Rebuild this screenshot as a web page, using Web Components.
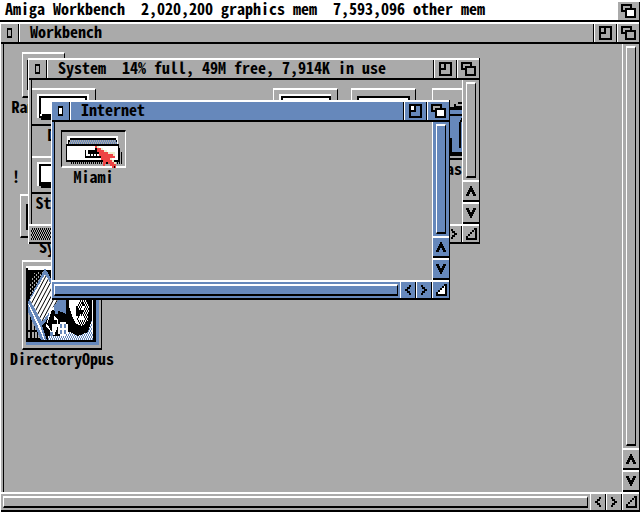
<!DOCTYPE html>
<html lang="en">
<head>
<meta charset="utf-8">
<title>Amiga Workbench</title>
<style>
html, body { margin: 0; height: 100%; }
body {
  --grey: #aaaaaa; --blue: #6688bb; --ink: #000; --lit: #fff;
  background: var(--grey); color: var(--ink);
  font: 700 16px/16px "Noto Sans Mono CJK JP", "Noto Sans CJK JP", "Liberation Mono", monospace;
  font-feature-settings: "hwid" 1;
}
</style>
</head>
<body>
<wb-screen>
  <wb-menubar slot="bar">Amiga Workbench  2,020,200 graphics mem  7,593,096 other mem</wb-menubar>

  <wb-window slot="root" heading="Workbench">
    <wb-icon label="Ram Disk" style="left:18px;top:8px">
      <svg width="41" height="42" shape-rendering="crispEdges"><path d="M4 6h34v2H6v28H4z"/></svg>
    </wb-icon>
    <wb-icon label="!" bare style="left:8px;top:124px"></wb-icon>
    <wb-icon label="System" style="left:16px;top:150px">
      <svg width="84" height="40" shape-rendering="crispEdges"><path d="M5 8h70v26H5z"/><path fill="#fff" d="M7 8h66v24H7z"/></svg>
    </wb-icon>
    <wb-icon label="DirectoryOpus" style="left:18px;top:216px">
      <svg width="78" height="86" viewBox="1 2 78 86" shape-rendering="crispEdges">
        <defs>
          <pattern id="st" width="4" height="6" patternUnits="userSpaceOnUse" patternTransform="skewX(-28)"><path fill="#fff" d="M0 0h4v6H0z"/><path d="M0 0h1v6H0z"/></pattern>
          <pattern id="ck" width="2" height="4" patternUnits="userSpaceOnUse"><path d="M0 0h1v2H0zM1 2h1v2H1z"/></pattern>
          <pattern id="cb" width="2" height="4" patternUnits="userSpaceOnUse"><path fill="#68b" d="M0 0h2v4H0z"/><path fill="#fff" d="M0 0h1v2H0zM1 2h1v2H1z"/></pattern>
          <pattern id="cg" width="4" height="4" patternUnits="userSpaceOnUse"><path fill="#aaa" d="M0 0h1v2H0zM2 2h1v2H2z"/></pattern>
        </defs>
        <path fill="#68b" d="M4 82h73v3H4zM74 8h3v76h-3z"/>
        <path fill="#fff" d="M4 6h72v2H4z"/>
        <path d="M4 8h70v74H4z"/>
        <path fill="#fff" d="M6 8h66v2H6zM70 10h1v68h-1z"/>
        <path fill="url(#cg)" d="M13 12h8L8 40V24z"/>
        <path fill="#aaa" d="M6 48h12v30H6z"/>
        <path d="M8 54h2v24H8zM12 60h1v18h-1zM15 64h1v14h-1zM6 70h12v2H6z"/>
        <path fill="#68b" d="M23 8l16 28 2 4-21 26 5 14h-6L6 52V42z"/>
        <path fill="#fff" d="M6 44h1l12 24 4 12h-1z"/>
        <path fill="url(#st)" d="M23 14l6 10 9 14-18 24L8 40z"/>
        <path fill="#68b" d="M40 38h4v16l-4-2-10-2z"/>
        <path fill="#fff" d="M28 50l4-4v10l5 4 1 6-6 10-8-10z"/>
        <path d="M30 50h2v10h3v4h-5v8l-5-8zM36 54l4 6-4 16h-4l4-10z"/>
        <path fill="#68b" d="M33 46h3v8h-3zM28 72h3v4h-3z"/>
        <path fill="url(#cb)" d="M26 76h45v4H26zM44 72h27v8H44zM66 60h4v18h-4z"/>
        <path d="M44 38h26v22l-4 12-10 4-8-4-4-16z"/>
        <path fill="#fff" d="M47 38h17l3 8-1 14-5 6-7-2-4-8-3-10z"/>
        <path fill="url(#ck)" d="M57 38h10v24l-6 6-6-6z"/>
        <path d="M54 46h2v4h3v4h-2v2h-3zM60 42h2v4h-2zM58 50h3v4h-3z"/>
        <path fill="#fff" d="M60 46h2v4h-2zM57 56h5v4h-5zM38 62h6v2h2v10h-2v2h-6v-2h-2V64h2z"/>
        <path fill="#68b" d="M38 64h2v4h-2zM42 64h2v4h-2zM38 70h2v4h-2zM42 70h2v4h-2z"/>
      </svg>
    </wb-icon>
  </wb-window>

  <wb-window slot="free" heading="System  14% full, 49M free, 7,914K in use" dithered style="left:28px;top:58px;width:452px;height:186px">
    <wb-icon label="Demo" style="left:-1px;top:8px">
      <svg width="63" height="34" shape-rendering="crispEdges"><path fill="#fff" d="M5 4h52v24H5z"/><path d="M7 6h48v22H7zM9 28h50v2H9z"/><path fill="#fff" d="M9 8h44v16H9zM8 24h2v2H8z"/></svg>
    </wb-icon>
    <wb-icon label="Storage" style="left:-1px;top:76px">
      <svg width="63" height="34" shape-rendering="crispEdges"><path fill="#fff" d="M5 4h52v24H5z"/><path d="M7 6h48v22H7zM9 28h50v2H9z"/><path fill="#fff" d="M9 8h44v16H9z"/></svg>
    </wb-icon>
    <wb-icon style="left:241px;top:8px">
      <svg width="63" height="34" shape-rendering="crispEdges"><path fill="#fff" d="M5 4h52v24H5z"/><path d="M7 6h50v22H7z"/><path fill="#fff" d="M9 8h46v18H9z"/></svg>
    </wb-icon>
    <wb-icon style="left:319px;top:8px">
      <svg width="63" height="34" shape-rendering="crispEdges"><path d="M5 6h53v22H5z"/><path fill="#fff" d="M7 8h49v18H7z"/></svg>
    </wb-icon>
    <wb-icon label="Classes" style="left:400px;top:8px">
      <svg width="50" height="68" shape-rendering="crispEdges"><path d="M21 14h4v-2h20v5h4v45H5V17h16z"/><path fill="#68b" d="M7 20h42v4H7zM7 26h42v36H7z"/><path fill="#aaa" d="M23 14h22v2H23z"/><path d="M17 48h2v14h-2zM26 32h2v26h-2zM28 28h3v2h-3zM27 30h2v2h-2zM30 34h1v2h-1zM29 36h1v2h-1zM30 40h1v2h-1zM29 42h1v2h-1zM30 46h1v2h-1zM29 50h1v2h-1zM30 54h1v4h-1zM5 62h44v4H5z"/></svg>
    </wb-icon>
  </wb-window>

  <wb-window slot="free" heading="Internet" active style="left:51px;top:100px;width:399px;height:200px">
    <wb-icon label="Miami" selected style="left:6px;top:8px">
      <svg width="63" height="34" viewBox="62 132 63 34" shape-rendering="crispEdges">
        <defs><pattern id="bd" width="2" height="4" patternUnits="userSpaceOnUse"><path fill="#68b" d="M0 0h2v4H0z"/><path fill="#aaa" d="M0 0h1v2H0zM1 2h1v2H1z"/></pattern></defs>
        <path fill="#fff" d="M67 136h51v10H67z"/>
        <path d="M70 138h46v2h1v4h2v18H66v-18h2v-4h2z"/>
        <path fill="url(#bd)" d="M70 140h46v2h1v2H69v-2h1z"/>
        <path fill="#fff" d="M67 146h51v14H67z"/>
        <path d="M85 150h1v6h14v2H85zM88 150h10v2h2v4h-1v-2h-2v2h-1v-2h-2v2h-1v-2h-2v2h-1v-2h-2zM119 148h1v14h-1zM121 152h1v12h-1z"/>
        <path stroke="#000" stroke-width="2" stroke-dasharray="1 1" d="M71 163h49"/>
      </svg>
    </wb-icon>
  </wb-window>

  <wb-pointer slot="free" style="left:95px;top:146px"></wb-pointer>
</wb-screen>

<script>
const define = (name, html, setup) => customElements.define(name, class extends HTMLElement {
  constructor() {
    super();
    const t = document.createElement('template');
    t.innerHTML = html;
    this.attachShadow({ mode: 'open' }).append(t.content.cloneNode(true));
  }
  connectedCallback() { if (setup) setup(this, this.shadowRoot); }
});

/* Gadget glyphs on a grid whose cells are 1px wide and 2px high: [width, rows, ink path, front fill, back fill] */
const GLYPHS = {
  close: [5, 5, 'M0 0h5v5H0zM1 1v3h3V1z', 'M1 1h3v3H1z', ''],
  zoom:  [13, 7, 'M0 0h13v7H0zM2 1v2h3V1zM7 1v3H2v2h9V1z', 'M2 1h3v2H2z', ''],
  depth: [15, 7, 'M0 0h11v2h4v5H4V4H0zM2 1v2h2V2h5V1zM6 3v3h7V3z', 'M6 3h7v3H6z', 'M2 1h7v1H4v1H2z'],
  up:    [10, 5, 'M4 0h2v1h1v1h1v1h1v1h1v1H7V4H6V3H4v1H3v1H0V4h1V3h1V2h1V1h1z', '', ''],
  down:  [10, 5, 'M0 0h3v1h1v1h2V1h1V0h3v1H9v1H8v1H7v1H6v1H4V4H3V3H2V2H1V1H0z', '', ''],
  left:  [6, 5, 'M4 0h2v1H5v1H3v1h2v1h1v1H4V4H2V3H0V2h2V1h2z', '', ''],
  right: [6, 5, 'M0 0h2v1h2v1h2v1H4v1H2v1H0V4h1V3h2V2H1V1H0z', '', ''],
  size:  [11, 6, 'M8 0h3v6H0V4h2V3h2V2h2V1h2zM9 1H8v1H6v1H4v1H2v1h7z', 'M8 1h1v4H2V4h2V3h2V2h2z', '']
};

define('wb-gadget', `
<style>
:host { display: block; }
button { all: unset; box-sizing: border-box; display: grid; place-items: center; width: 100%; height: 100%; cursor: default; }
svg { display: block; }
</style>
<button type="button"></button>`, (el, root) => {
  const [w, rows, ink, front, back] = GLYPHS[el.getAttribute('kind')];
  const b = root.querySelector('button');
  b.setAttribute('aria-label', el.getAttribute('kind'));
  b.innerHTML = `<svg width="${w}" height="${rows * 2}" viewBox="0 0 ${w} ${rows}" preserveAspectRatio="none" shape-rendering="crispEdges"><path style="fill:var(--glyph-back,none)" d="${back}"/><path style="fill:var(--glyph-fill,none)" d="${front}"/><path fill-rule="evenodd" d="${ink}"/></svg>`;
});

define('wb-menubar', `
<style>
:host { display: flex; height: 20px; background: var(--lit); border-bottom: 2px solid var(--ink); --glyph-fill: #fff; }
h1 { flex: 1; min-width: 0; margin: 0; padding-left: 5px; font: inherit; white-space: pre; }
wb-gadget { width: 21px; margin-top: 2px; background: var(--grey); border-right: 1px solid var(--ink); }
</style>
<h1><slot></slot></h1><wb-gadget kind="depth"></wb-gadget>`);

define('wb-window', `
<style>
:host { --face: var(--grey); box-sizing: border-box; display: grid; grid-template-rows: 22px 1fr 20px;
  background: var(--face); border: solid; border-width: 0 1px; border-color: var(--lit) var(--ink) var(--ink) var(--lit); }
:host([active]) { --face: var(--blue); --glyph-fill: #fff; --glyph-back: #aaa; }
header { display: flex; border-top: 2px solid var(--lit); border-bottom: 2px solid var(--ink); }
header wb-gadget { width: 21px; border-left: 1px solid var(--lit); border-right: 1px solid var(--ink); }
header .close { width: 17px; border-left: 0; }
header .depth { border-right: 0; }
h2 { flex: 1; min-width: 0; margin: 0; padding-left: 10px; font: inherit; line-height: 14px; white-space: pre;
  border-left: 1px solid var(--lit); border-right: 1px solid var(--ink); }
.middle { display: flex; min-height: 0; padding-left: 2px; }
.content { position: relative; flex: 1; min-width: 0; overflow: hidden; background: var(--grey); border-left: 1px solid var(--ink); }
.side { display: grid; grid-template-rows: 1fr 22px 22px; width: 16px; border-left: 1px solid var(--lit); }
.knob { box-sizing: border-box; border: solid; border-width: 2px 1px; border-color: var(--lit) var(--ink) var(--ink) var(--lit); }
.side .knob { margin: 2px 3px; }
.side wb-gadget { box-sizing: border-box; border-top: 2px solid var(--lit); border-bottom: 2px solid var(--ink); }
footer { display: flex; border-top: 2px solid var(--lit); border-bottom: 2px solid var(--ink); }
footer .knob { flex: 1; margin: 2px; }
footer wb-gadget { box-sizing: border-box; width: 16px; border-left: 1px solid var(--lit); border-right: 1px solid var(--ink); }
footer .size { width: 17px; border-right: 0; }
:host([dithered]) footer .knob { border: 0; background: conic-gradient(#000 25%, var(--grey) 0 50%, #000 0 75%, var(--grey) 0) 0 0 / 2px 4px; }
</style>
<header><wb-gadget class="close" kind="close"></wb-gadget><h2></h2><wb-gadget kind="zoom"></wb-gadget><wb-gadget class="depth" kind="depth"></wb-gadget></header>
<div class="middle">
  <div class="content"><slot></slot></div>
  <div class="side"><div class="knob"></div><wb-gadget kind="up"></wb-gadget><wb-gadget kind="down"></wb-gadget></div>
</div>
<footer><div class="knob"></div><wb-gadget kind="left"></wb-gadget><wb-gadget kind="right"></wb-gadget><wb-gadget class="size" kind="size"></wb-gadget></footer>`,
(el, root) => { root.querySelector('h2').textContent = el.getAttribute('heading'); });

define('wb-icon', `
<style>
:host { position: absolute; display: block; }
button { all: unset; display: flex; flex-direction: column; align-items: center; cursor: default; }
.frame { border: solid; border-width: 2px 1px; border-color: var(--lit) var(--ink) var(--ink) var(--lit); }
:host([selected]) .frame { border-color: var(--ink) var(--lit) var(--lit) var(--ink); }
:host([bare]) .frame { border: 0; }
::slotted(svg) { display: block; }
.caption { display: flex; justify-content: center; width: 0; white-space: pre; }
:host([bare]) .caption { width: auto; }
</style>
<button type="button"><span class="frame"><slot></slot></span><span class="caption"></span></button>`,
(el, root) => { root.querySelector('.caption').textContent = el.getAttribute('label') || ''; });

define('wb-pointer', `
<style>:host { position: absolute; pointer-events: none; } svg { display: block; }</style>
<svg width="22" height="22" viewBox="0 0 22 11" preserveAspectRatio="none" shape-rendering="crispEdges">
<path fill="#eeeecc" d="M2 0h2v1H2zM6 1h2v1H6zM9 2h3v1H9zM13 3h7v1h-7zM18 4h2v1h-2zM15 6h2v1h-2zM17 7h2v1h-2zM19 8h2v1h-2z"/>
<path fill="#ee4444" d="M0 0h2v1H0zM2 1h4v1H2zM2 2h7v1H2zM4 3h9v1H4zM4 4h14v1H4zM6 5h14v1H6zM6 6h9v1H6zM8 7h9v1H8zM8 8h3v1H8zM13 8h6v1h-6zM8 9h2v1H8zM15 9h6v1h-6zM17 10h4v1h-4z"/>
<path d="M0 1h2v1H0zM2 3h2v1H2zM4 5h2v1H4zM11 8h2v1h-2zM19 10h1v1h-1z"/></svg>`);

define('wb-screen', `
<style>
:host { position: relative; display: flex; flex-direction: column; min-height: 100vh; overflow: hidden; }
::slotted([slot="root"]) { flex: 1; }
::slotted([slot="free"]) { position: absolute; }
</style>
<slot name="bar"></slot><slot name="root"></slot><slot name="free"></slot>`);
</script>
</body>
</html>
